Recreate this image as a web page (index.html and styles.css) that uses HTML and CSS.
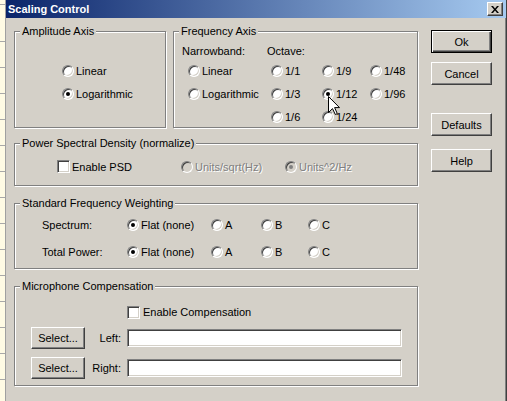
FILE: index.html
```html
<!DOCTYPE html>
<html lang="en">
<head>
<meta charset="UTF-8" />
<title>Scaling Control</title>
<link rel="stylesheet" href="styles.css">
</head>
<body>

<div class="desk">
  <div class="behind"></div>

  <div class="window">
    <div class="titlebar">
      <span class="title">Scaling Control</span>
      <button class="close">
        <svg width="8" height="7" viewBox="0 0 8 7"><path d="M0 0h2l2 2.4 2-2.4h2l-3 3.5 3 3.5h-2l-2-2.4-2 2.4h-2l3-3.5z" fill="#000"/></svg>
      </button>
    </div>

    <div class="client">
      <div class="left">

        <div class="top-row">
          <!-- Amplitude -->
          <div class="group amp">
            <span class="caption">Amplitude Axis</span>
            <label class="opt"><span class="radio"></span>Linear</label>
            <label class="opt"><span class="radio on"></span>Logarithmic</label>
          </div>

          <!-- Frequency -->
          <div class="group freq">
            <span class="caption">Frequency Axis</span>
            <div class="freq-grid">
              <span class="head">Narrowband:</span>
              <span class="head">Octave:</span>
              <span></span>
              <span></span>

              <label class="opt nb"><span class="radio"></span>Linear</label>
              <label class="opt oc"><span class="radio"></span>1/1</label>
              <label class="opt"><span class="radio"></span>1/9</label>
              <label class="opt"><span class="radio"></span>1/48</label>

              <label class="opt nb"><span class="radio"></span>Logarithmic</label>
              <label class="opt oc"><span class="radio"></span>1/3</label>
              <label class="opt"><span class="radio on"></span>1/12</label>
              <label class="opt"><span class="radio"></span>1/96</label>

              <span></span>
              <label class="opt oc"><span class="radio"></span>1/6</label>
              <label class="opt"><span class="radio"></span>1/24</label>
              <span></span>
            </div>
          </div>
        </div>

        <!-- PSD -->
        <div class="group psd">
          <span class="caption">Power Spectral Density (normalize)</span>
          <label class="opt psd-check"><span class="check"></span>Enable PSD</label>
          <label class="opt off psd-a"><span class="radio"></span>Units/sqrt(Hz)</label>
          <label class="opt off"><span class="radio on"></span>Units^2/Hz</label>
        </div>

        <!-- Weighting -->
        <div class="group sfw">
          <span class="caption">Standard Frequency Weighting</span>
          <span>Spectrum:</span>
          <label class="opt"><span class="radio on"></span>Flat (none)</label>
          <label class="opt"><span class="radio"></span>A</label>
          <label class="opt"><span class="radio"></span>B</label>
          <label class="opt"><span class="radio"></span>C</label>

          <span>Total Power:</span>
          <label class="opt"><span class="radio on"></span>Flat (none)</label>
          <label class="opt"><span class="radio"></span>A</label>
          <label class="opt"><span class="radio"></span>B</label>
          <label class="opt"><span class="radio"></span>C</label>
        </div>

        <!-- Microphone -->
        <div class="group mic">
          <span class="caption">Microphone Compensation</span>
          <label class="mic-check"><span class="check"></span>Enable Compensation</label>
          <div class="file-row">
            <button class="btn select">Select...</button>
            <span class="file-label">Left:</span>
            <input class="field" type="text">
          </div>
          <div class="file-row second">
            <button class="btn select">Select...</button>
            <span class="file-label">Right:</span>
            <input class="field" type="text">
          </div>
        </div>

      </div>

      <div class="buttons">
        <button class="btn default">Ok</button>
        <button class="btn cancel">Cancel</button>
        <button class="btn defaults">Defaults</button>
        <button class="btn help">Help</button>
      </div>
    </div>
  </div>
</div>

<svg class="cursor" width="12" height="19" viewBox="0 0 12 19">
  <path d="M0.5 0.5V16.5L4.5 12.6L7.3 18.5L9.3 17.6L6.6 11.6H11.5Z" fill="#fff" stroke="#000" stroke-width="1" stroke-linejoin="miter"/>
</svg>

</body>
</html>
```

FILE: styles.css
```css
body {
  margin: 0;
  font: 11px "Liberation Sans", Arial, sans-serif;
  color: #000;
  background: #d4d0c8;
  overflow: hidden;
}
.desk {
  display: flex;
  height: 401px;
}
.behind {
  width: 5px;
  flex: none;
  background-color: #fffbe4;
  background-image: repeating-linear-gradient(to bottom, transparent 0 25px, #a8a8a8 25px 26px);
  background-position: 0 16px;
}
.window {
  flex: 1;
  display: flex;
  flex-direction: column;
  border-left: 1px solid #a0a0a0;
  border-right: 1px solid #404040;
  box-shadow: inset -1px 0 0 #808080;
  background: #d4d0c8;
}
.titlebar {
  height: 18px;
  flex: none;
  display: flex;
  align-items: center;
  justify-content: space-between;
  padding-left: 2px;
  background: linear-gradient(to right, #0a246a, #a6caf0);
}
.title {
  color: #fff;
  font-weight: bold;
  font-size: 11px;
}
.close {
  width: 16px;
  height: 14px;
  margin-right: 3px;
  padding: 0;
  box-sizing: border-box;
  display: flex;
  align-items: center;
  justify-content: center;
  background: #d4d0c8;
  border: 1px solid;
  border-color: #fff #404040 #404040 #fff;
  box-shadow: inset -1px -1px 0 #808080;
}
.client {
  display: flex;
  padding: 13px 0 0 8px;
}
.left {
  width: 404px;
  display: flex;
  flex-direction: column;
}

/* group boxes */
.group {
  position: relative;
  box-sizing: border-box;
  border: 1px solid #808080;
  box-shadow: 1px 1px 0 #fff, inset 1px 1px 0 #fff;
}
.caption {
  position: absolute;
  left: 5px;
  top: -8px;
  padding: 0 2px;
  line-height: 14px;
  background: #d4d0c8;
  white-space: nowrap;
}
.top-row {
  display: flex;
  gap: 7px;
}
.amp {
  width: 152px;
  height: 97px;
  padding: 27px 0 0 47px;
}
.freq {
  width: 245px;
  height: 97px;
  padding: 11px 0 0 8px;
}
.freq-grid {
  display: grid;
  grid-template-columns: 85px 55px 48px auto;
  grid-template-rows: 16px 23px 23px 23px;
}
.head {
  align-self: center;
}
.nb {
  margin-left: 6px;
}
.oc {
  margin-left: 4px;
}
.psd {
  height: 43px;
  margin-top: 15px;
  padding: 11px 0 0 42px;
  display: flex;
}
.psd-check {
  width: 124px;
  gap: 3px;
}
.psd-a {
  width: 104px;
}
.sfw {
  height: 66px;
  margin-top: 17px;
  padding: 9px 0 0 27px;
  display: grid;
  grid-template-columns: 85px 84px 50px 47px auto;
  grid-auto-rows: 23px;
  row-gap: 4px;
  align-items: center;
}
.mic {
  height: 100px;
  margin-top: 17px;
  padding: 16px 0 0 16px;
}
.mic-check {
  height: 18px;
  margin-left: 96px;
  display: flex;
  align-items: center;
  gap: 3px;
}
.file-row {
  display: flex;
  align-items: center;
  margin-top: 6px;
}
.file-row.second {
  margin-top: 8px;
}
.file-label {
  width: 38px;
  box-sizing: border-box;
  text-align: right;
  padding-right: 2px;
  margin-right: 4px;
}
.field {
  width: 275px;
  height: 18px;
  box-sizing: border-box;
  margin: 0;
  padding: 0 2px;
  font: inherit;
  background: #fff;
  border: 1px solid;
  border-color: #808080 #fff #fff #808080;
  box-shadow: inset 1px 1px 0 #404040, inset -1px -1px 0 #d4d0c8;
  outline: none;
}

/* radios and checkboxes */
.opt {
  display: flex;
  align-items: center;
  height: 23px;
  gap: 2px;
  white-space: nowrap;
}
.opt.off {
  color: #808080;
  text-shadow: 1px 1px 0 #fff;
}
.radio {
  position: relative;
  flex: none;
  width: 12px;
  height: 12px;
  box-sizing: border-box;
  border-radius: 50%;
  background: #fff;
  border: 1px solid;
  border-color: #808080 #fff #fff #808080;
  box-shadow: inset 1px 1px 0 #404040, inset -1px -1px 0 #d4d0c8;
}
.radio.on::after {
  content: "";
  position: absolute;
  left: 3px;
  top: 3px;
  width: 4px;
  height: 4px;
  border-radius: 50%;
  background: #000;
}
.off .radio {
  background: #d4d0c8;
}
.off .radio.on::after {
  background: #808080;
}
.check {
  flex: none;
  width: 13px;
  height: 13px;
  box-sizing: border-box;
  background: #fff;
  border: 1px solid;
  border-color: #808080 #fff #fff #808080;
  box-shadow: inset 1px 1px 0 #404040, inset -1px -1px 0 #d4d0c8;
}

/* push buttons */
.btn {
  box-sizing: border-box;
  height: 23px;
  padding: 0;
  font: inherit;
  color: #000;
  background: #d4d0c8;
  border: 1px solid;
  border-color: #fff #404040 #404040 #fff;
  box-shadow: inset -1px -1px 0 #808080;
}
.buttons {
  width: 61px;
  margin-left: 13px;
  margin-top: -1px;
  display: flex;
  flex-direction: column;
}
.btn.default {
  border-color: #000;
  box-shadow: inset 1px 1px 0 #fff, inset -1px -1px 0 #404040, inset -2px -2px 0 #808080;
}
.btn.cancel {
  margin-top: 9px;
}
.btn.defaults {
  margin-top: 28px;
}
.btn.help {
  margin-top: 13px;
}
.btn.select {
  width: 54px;
  height: 22px;
  flex: none;
}

.cursor {
  position: absolute;
  left: 328px;
  top: 96px;
  pointer-events: none;
}
```
